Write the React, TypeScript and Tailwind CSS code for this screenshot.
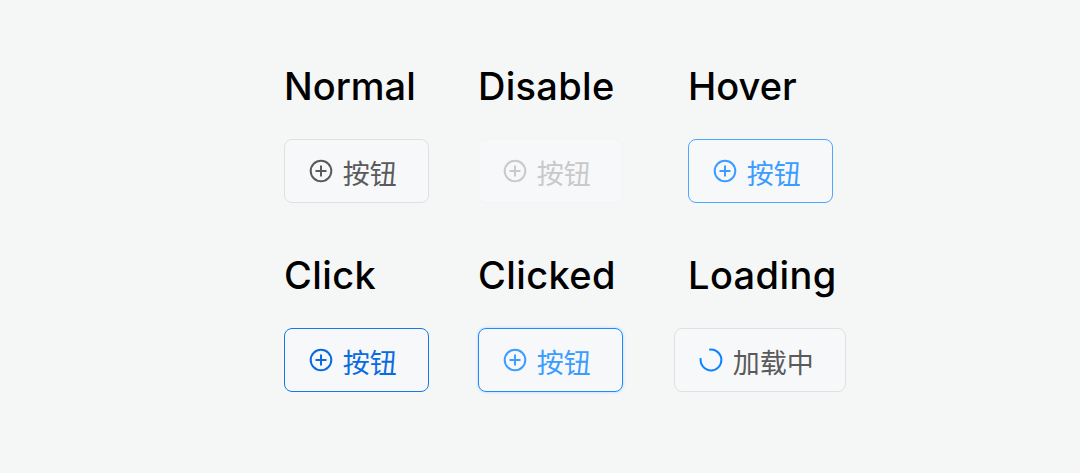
import React from 'react';
import clsx from 'clsx';

type Variant = 'normal' | 'disabled' | 'hover' | 'click' | 'clicked' | 'loading';

const variantStyles: Record<Variant, string> = {
  normal: 'border-[#dfe1e1] text-[#5a5a5a]',
  disabled: 'border-[#f3f4f5] text-[#c8c9c9]',
  hover: 'border-[#4da6ff] text-[#3a9dff]',
  click: 'border-[#1677e8] text-[#0a6be0]',
  clicked: 'border-[#1f8bff] text-[#3a9dff] shadow-[0_0_3px_rgba(0,129,255,0.3)]',
  loading: 'border-[#dfe1e1] text-[#5a5a5a]',
};

const rows: { title: string; variant: Variant; label: string; tracking: string }[][] = [
  [
    { title: 'Normal', variant: 'normal', label: '按钮', tracking: 'tracking-normal' },
    { title: 'Disable', variant: 'disabled', label: '按钮', tracking: 'tracking-[0.3px]' },
    { title: 'Hover', variant: 'hover', label: '按钮', tracking: 'tracking-normal' },
  ],
  [
    { title: 'Click', variant: 'click', label: '按钮', tracking: 'tracking-[0.4px]' },
    { title: 'Clicked', variant: 'clicked', label: '按钮', tracking: 'tracking-[0.4px]' },
    { title: 'Loading', variant: 'loading', label: '加载中', tracking: 'tracking-[0.4px]' },
  ],
];

const PlusCircle: React.FC = () => (
  <svg className="w-6 h-6 shrink-0" viewBox="0 0 24 24" fill="none" stroke="currentColor" strokeWidth="2">
    <circle cx="12" cy="12" r="10.3" />
    <path d="M12 6.5v11M6.5 12h11" />
  </svg>
);

const Spinner: React.FC = () => (
  <svg className="w-6 h-6 shrink-0 text-[#0a84ff]" viewBox="0 0 24 24" fill="none" stroke="currentColor" strokeWidth="2">
    <path d="M10.2 1.75A10.4 10.4 0 1 1 1.75 10.2" />
  </svg>
);

const StateButton: React.FC<{ variant: Variant; label: string }> = ({ variant, label }) => (
  <button
    disabled={variant === 'disabled'}
    className={clsx(
      'flex h-16 items-center rounded-lg border-[1.4px] bg-[#f7f8fa] pl-[24.25px] pr-[30.75px]',
      variant === 'loading' && '-ml-3.5',
      variantStyles[variant]
    )}
  >
    {variant === 'loading' ? <Spinner /> : <PlusCircle />}
    <span className="ml-[9.5px] mt-1 whitespace-nowrap text-[27px] leading-10 font-['Noto_Sans_CJK_SC',sans-serif]">
      {label}
    </span>
  </button>
);

const App: React.FC = () => {
  return (
    <main className="h-[473px] bg-[#f5f7f7] pl-[284px] pt-[62px]">
      <div className="flex flex-col gap-12">
        {rows.map((row, i) => (
          <div key={i} className="grid grid-cols-[194px_210px_174px]">
            {row.map((item) => (
              <div key={item.title} className="flex flex-col items-start gap-[29px]">
                <h2
                  className={clsx(
                    "text-[38px] leading-[48px] font-medium text-black font-['Inter',sans-serif]",
                    item.tracking
                  )}
                >
                  {item.title}
                </h2>
                <StateButton variant={item.variant} label={item.label} />
              </div>
            ))}
          </div>
        ))}
      </div>
    </main>
  );
};

export default App;
